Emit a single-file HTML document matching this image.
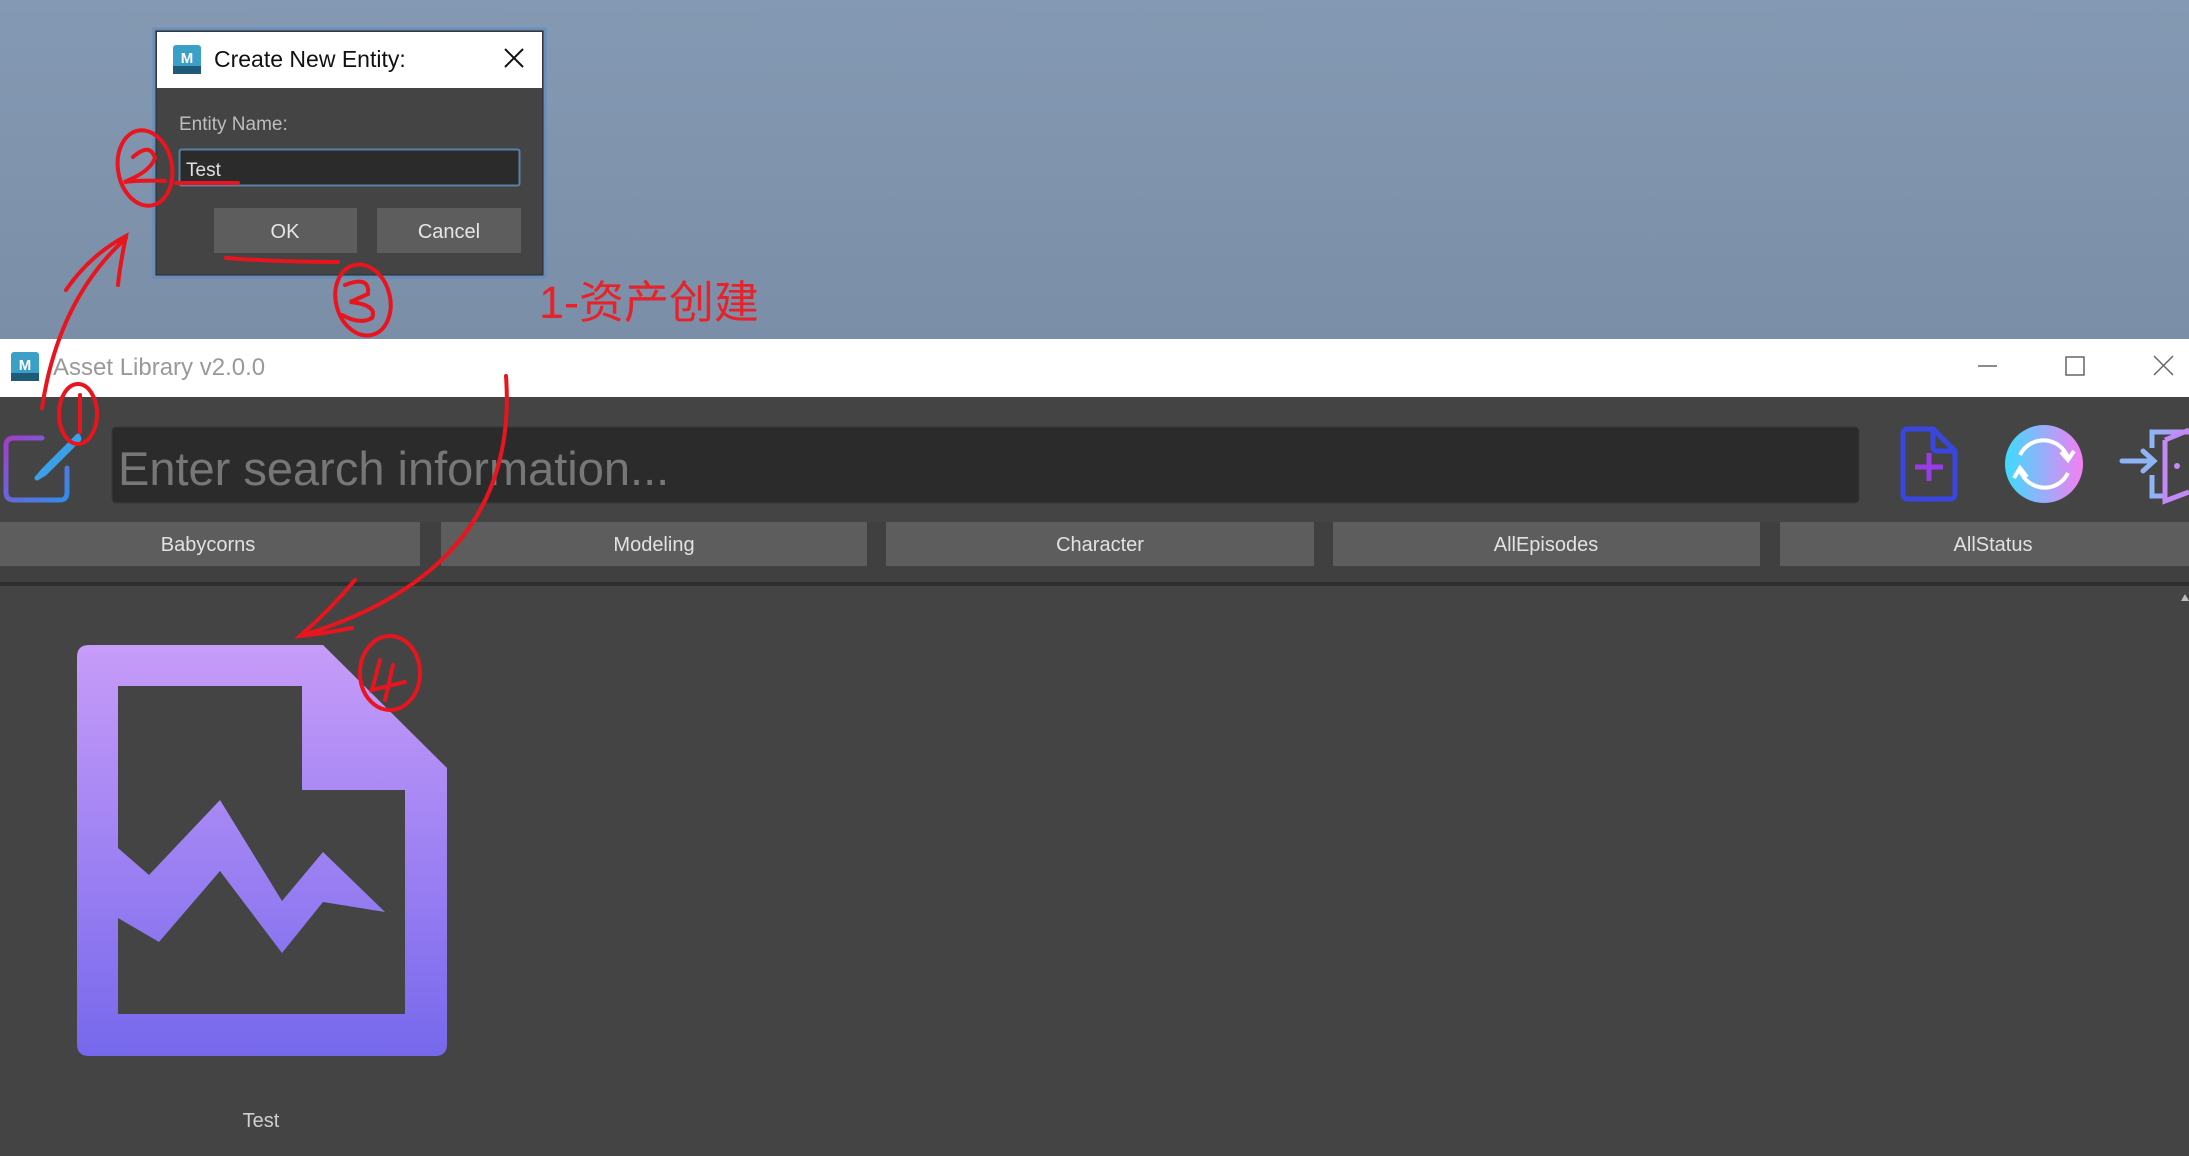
<!DOCTYPE html>
<html><head><meta charset="utf-8"><style>
html,body{margin:0;padding:0;width:2189px;height:1156px;overflow:hidden;background:#444}
svg{display:block}
text{font-family:"Liberation Sans","Noto Sans CJK SC",sans-serif}
</style></head><body>
<svg width="2189" height="1156" viewBox="0 0 2189 1156" xmlns="http://www.w3.org/2000/svg">
<defs>
<linearGradient id="bg" x1="0" y1="0" x2="0" y2="1"><stop offset="0" stop-color="#8499b3"/><stop offset="1" stop-color="#7b8ea8"/></linearGradient>
<linearGradient id="ic" x1="0" y1="0" x2="0" y2="1"><stop offset="0" stop-color="#c79cf9"/><stop offset="1" stop-color="#7668ec"/></linearGradient>
<linearGradient id="sy" x1="0" y1="0" x2="1" y2="0"><stop offset="0" stop-color="#3ddcff"/><stop offset="1" stop-color="#f57ef2"/></linearGradient>
<linearGradient id="ed" x1="0" y1="0" x2="1" y2="1"><stop offset="0" stop-color="#a23ec8"/><stop offset="1" stop-color="#2f8ee8"/></linearGradient>
<linearGradient id="dr" x1="0" y1="0" x2="1" y2="0"><stop offset="0" stop-color="#8fb4f5"/><stop offset="1" stop-color="#c28af5"/></linearGradient>
</defs>
<rect width="2189" height="340" fill="url(#bg)"/>
<!-- Dialog -->
<rect x="154" y="29" width="391" height="248" fill="none" stroke="#5d8cc0" stroke-width="3" opacity="0.7"/>
<rect x="156" y="31" width="387" height="244" fill="#444" stroke="#2a2a2a" stroke-width="1"/>
<rect x="157" y="32" width="385" height="56" fill="#fff"/>
<rect x="173" y="45" width="28" height="29" rx="3" fill="#3aa0c8"/><rect x="173" y="66" width="28" height="8" fill="#1f5a78"/>
<text x="187" y="63" font-size="15" font-weight="bold" fill="#fff" text-anchor="middle">M</text>
<text x="214" y="67" font-size="23" fill="#111">Create New Entity:</text>
<path d="M505 49 L523 67 M523 49 L505 67" stroke="#111" stroke-width="2"/>
<text x="179" y="130" font-size="19" fill="#bdbdbd">Entity Name:</text>
<rect x="179.5" y="149.5" width="340" height="36" rx="2" fill="#2b2b2b" stroke="#5a82a8" stroke-width="2"/>
<text x="186" y="176" font-size="19" fill="#e0e0e0">Test</text>
<rect x="214" y="208" width="143" height="45" fill="#5d5d5d"/>
<text x="285" y="238" font-size="20" fill="#e6e6e6" text-anchor="middle">OK</text>
<rect x="377" y="208" width="144" height="45" fill="#5d5d5d"/>
<text x="449" y="238" font-size="20" fill="#e6e6e6" text-anchor="middle">Cancel</text>
<!-- Red title -->
<text x="539" y="318" font-size="45" fill="#e8222a">1-资产创建</text>
<!-- main window title bar -->
<rect x="0" y="339" width="2189" height="58" fill="#fff"/>
<rect x="11" y="352" width="28" height="29" rx="3" fill="#3aa0c8"/><rect x="11" y="373" width="28" height="8" fill="#1f5a78"/>
<text x="25" y="370" font-size="15" font-weight="bold" fill="#fff" text-anchor="middle">M</text>
<text x="53" y="375" font-size="24" fill="#999">Asset Library v2.0.0</text>
<path d="M1978 366 H1997" stroke="#666" stroke-width="1.5"/>
<rect x="2066" y="357" width="18" height="18" fill="none" stroke="#666" stroke-width="1.5"/>
<path d="M2154 356 L2173 375 M2173 356 L2154 375" stroke="#666" stroke-width="1.5"/>
<!-- toolbar -->
<rect x="0" y="397" width="2189" height="125" fill="#444"/>
<path d="M42 438 H14 Q6 438 6 446 V492 Q6 500 14 500 H60 Q67 500 67 492 V468" fill="none" stroke="url(#ed)" stroke-width="5" stroke-linecap="round"/>
<path d="M78 436 L44 470 L37 478 L45 473 L79 439 Z" fill="none" stroke="#3aa0e8" stroke-width="5" stroke-linejoin="round"/>
<rect x="112" y="427" width="1747" height="76" rx="4" fill="#2b2b2b" stroke="#383838"/>
<text x="118" y="485" font-size="47" fill="#777">Enter search information...</text>
<!-- new file icon -->
<path d="M1912 429 H1933 L1955 451 V494 Q1955 499 1950 499 H1908 Q1903 499 1903 494 V434 Q1903 429 1908 429 Z M1933 429 V447 Q1933 451 1937 451 H1955" fill="none" stroke="#3a46e2" stroke-width="5" stroke-linejoin="round"/>
<path d="M1929 453 V481 M1915 467 H1943" stroke="#9a3be8" stroke-width="5"/>
<circle cx="2044" cy="464" r="39" fill="url(#sy)"/>
<path d="M2020 455 A26 26 0 0 1 2068 458 M2068 473 A26 26 0 0 1 2020 470" fill="none" stroke="#fff" stroke-width="4"/>
<path d="M2061 452 L2068 460 L2074 451" fill="none" stroke="#fff" stroke-width="4"/>
<path d="M2014 478 L2020 468 L2027 477" fill="none" stroke="#fff" stroke-width="4"/>
<path d="M2122 461 H2154 M2143 451 L2154 461 L2143 471" fill="none" stroke="#8fb4f5" stroke-width="5" stroke-linecap="round"/>
<path d="M2152 448 V432 H2189 M2152 475 V496 H2165" fill="none" stroke="url(#dr)" stroke-width="5"/>
<path d="M2165 440 L2189 430 M2165 440 V501 L2189 492" fill="none" stroke="#c28af5" stroke-width="5"/>
<circle cx="2177" cy="466" r="3" fill="#c28af5"/>
<!-- tabs -->
<rect x="0" y="522" width="2189" height="64" fill="#404040"/>
<g fill="#5d5d5d">
<rect x="0" y="522" width="420" height="44"/><rect x="441" y="522" width="426" height="44"/><rect x="886" y="522" width="428" height="44"/><rect x="1333" y="522" width="427" height="44"/><rect x="1780" y="522" width="409" height="44"/>
</g>
<g font-size="20" fill="#e2e2e2" text-anchor="middle">
<text x="208" y="551">Babycorns</text><text x="654" y="551">Modeling</text><text x="1100" y="551">Character</text><text x="1546" y="551">AllEpisodes</text><text x="1993" y="551">AllStatus</text>
</g>
<rect x="0" y="582" width="2189" height="4" fill="#2e2e2e"/>
<rect x="0" y="586" width="2189" height="570" fill="#444"/>
<path d="M2181 601 L2185 594 L2189 601 Z" fill="#bbb"/>
<!-- big icon -->
<path d="M89 645 H323 L447 768 V1044 Q447 1056 435 1056 H89 Q77 1056 77 1044 V657 Q77 645 89 645 Z" fill="url(#ic)"/>
<path d="M118 686 H302 V790 H405 V1014 H118 V918 L159 942 L220 871 L282 953 L323 902 L385 912 L323 852 L282 901 L220 800 L149 875 L118 848 Z" fill="#444"/>
<text x="261" y="1127" font-size="20" fill="#cfcfcf" text-anchor="middle">Test</text>
<!-- red annotations -->
<g fill="none" stroke="#e8141e" stroke-width="4" stroke-linecap="round">
<ellipse cx="145" cy="168" rx="27" ry="38" transform="rotate(-10 145 168)"/>
<path d="M133 157 Q150 142 155 158 Q150 172 124 182 Q140 180 165 181"/>
<path d="M176 183 H238"/>
<path d="M226 258 Q280 262 338 262"/>
<ellipse cx="363" cy="300" rx="27" ry="36" transform="rotate(-15 363 300)"/>
<path d="M345 285 Q370 275 368 294 Q355 300 350 302 Q378 305 372 318 Q360 325 342 315"/>
<path d="M42 408 Q58 300 126 238"/>
<path d="M66 290 Q90 255 126 236 Q120 265 118 285"/>
<ellipse cx="78" cy="414" rx="19" ry="30"/>
<path d="M80 395 V432"/>
<path d="M506 376 Q520 570 300 636"/>
<path d="M355 580 Q330 610 300 636 Q320 634 352 628"/>
<ellipse cx="390" cy="673" rx="30" ry="37"/>
<path d="M380 660 L372 690 L405 682 M393 665 L385 700"/>
</g>
</svg>
</body></html>
